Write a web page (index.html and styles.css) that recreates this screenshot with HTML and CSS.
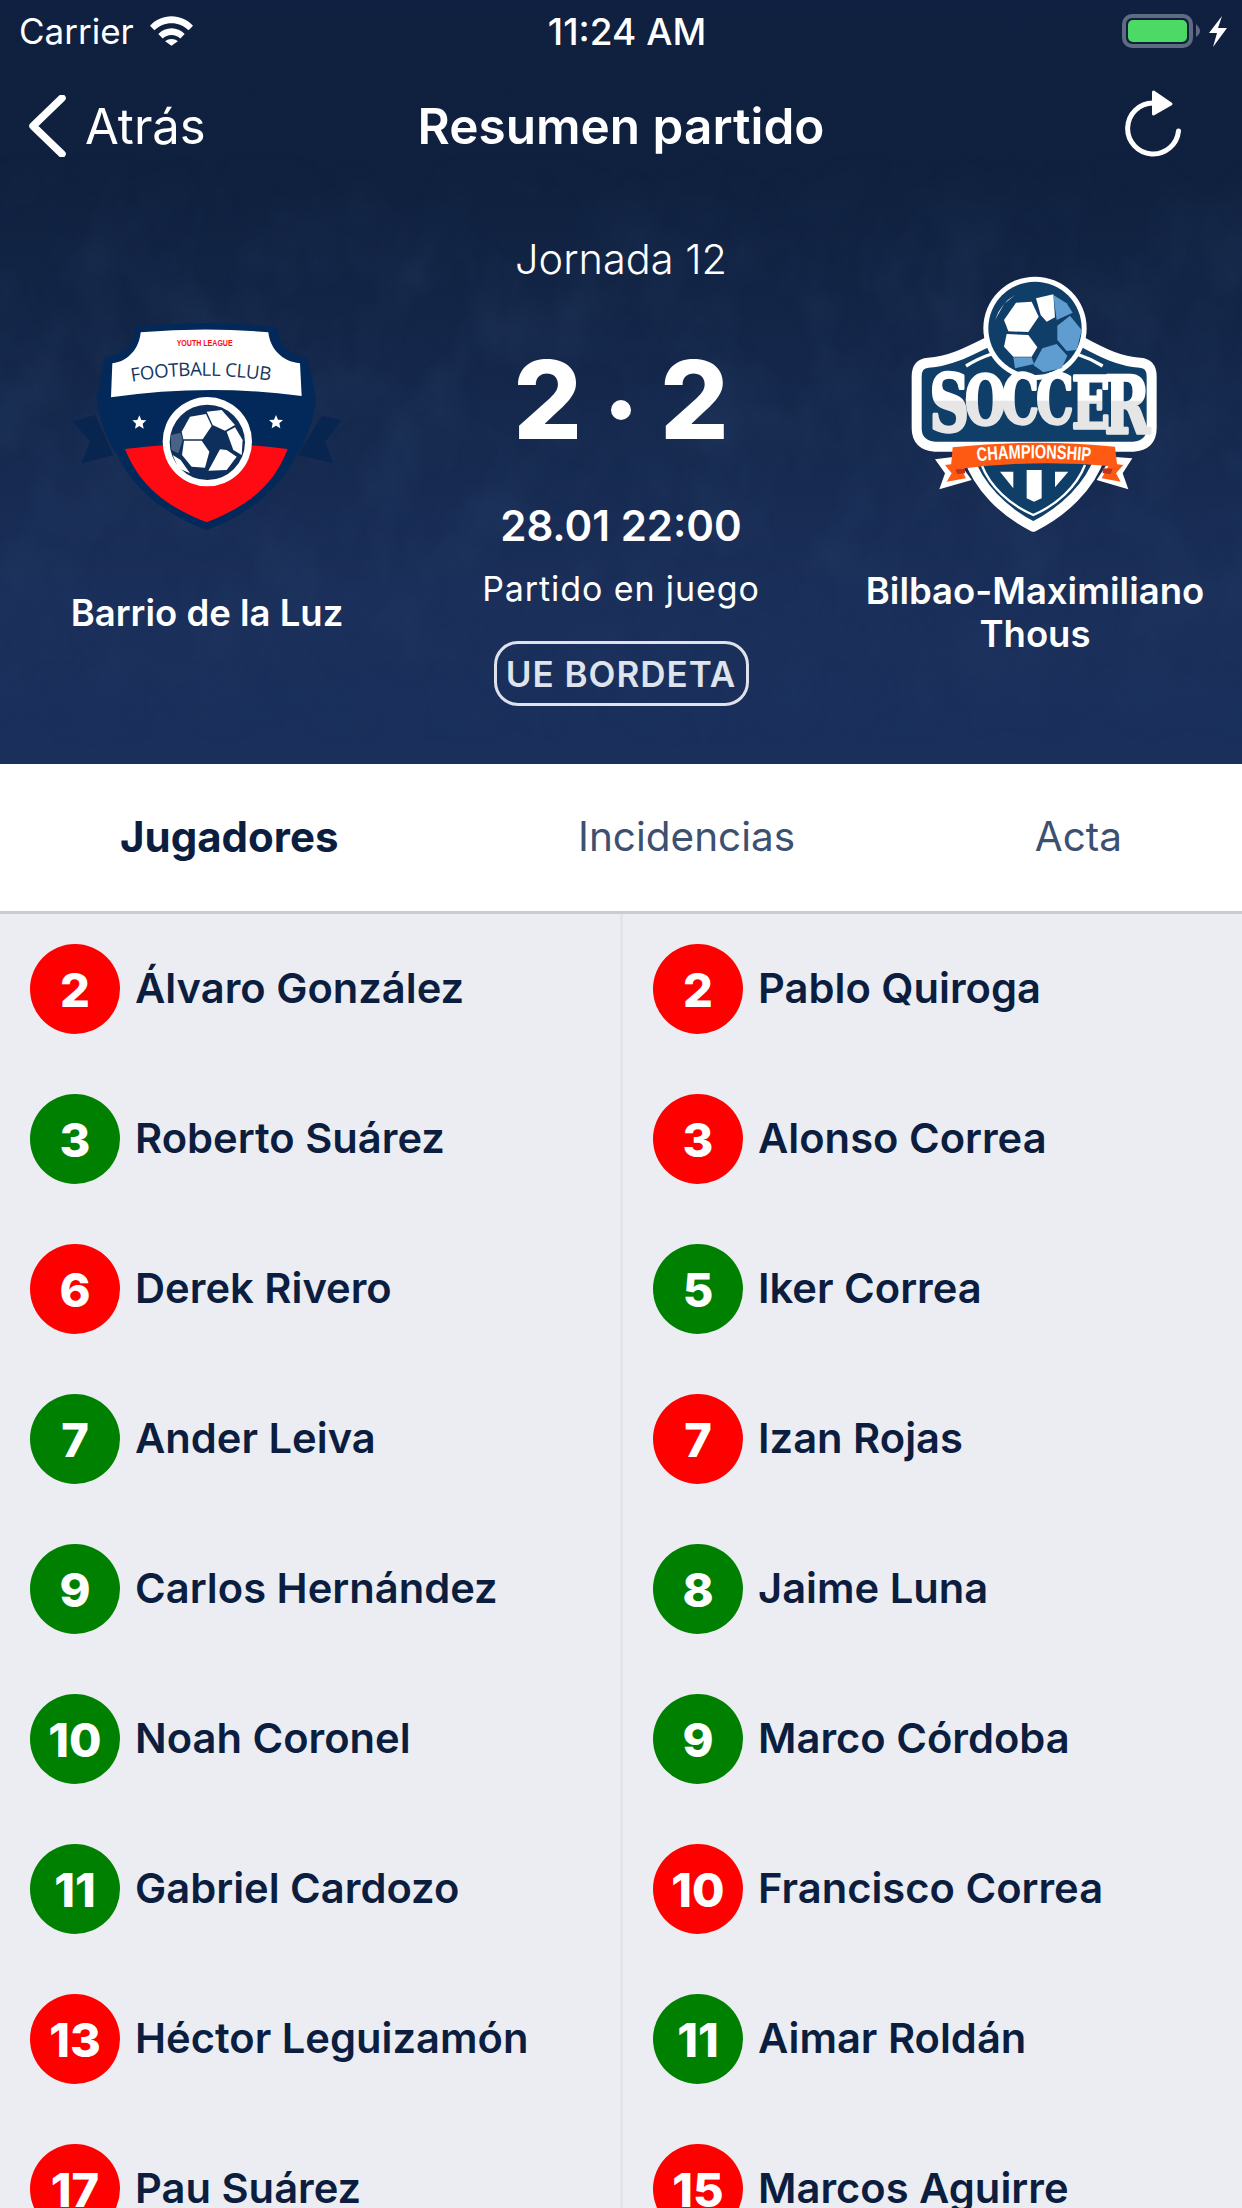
FILE: index.html
```html
<!DOCTYPE html>
<html lang="es">
<head>
<meta charset="utf-8">
<title>Resumen partido</title>
<link rel="stylesheet" href="styles.css">
</head>
<body>
<div class="app">
  <header class="hero">
    <svg class="hero-bg" viewBox="0 0 1242 764" preserveAspectRatio="none" aria-hidden="true">
      <defs>
        <filter id="mottle" x="0" y="0" width="100%" height="100%">
          <feTurbulence type="fractalNoise" baseFrequency=".016 .011" numOctaves="4" seed="11"/>
          <feColorMatrix type="matrix" values="0 0 0 0 .04  0 0 0 0 .09  0 0 0 0 .2  1.600 0 0 0 -.6"/>
        </filter>
        <linearGradient id="fade" x1="0" y1="0" x2="0" y2="1">
          <stop offset=".2" stop-color="#000"/><stop offset=".35" stop-color="#fff"/><stop offset=".75" stop-color="#fff"/><stop offset=".98" stop-color="#000"/>
        </linearGradient>
        <mask id="fade-mask"><rect width="1242" height="764" fill="url(#fade)"/></mask>
      </defs>
      <g mask="url(#fade-mask)"><rect width="1242" height="764" filter="url(#mottle)" opacity=".22"/></g>
    </svg>

    <div class="status-bar">
      <div class="status-left">
        <span>Carrier</span>
        <svg class="wifi" viewBox="0 0 44 30"><path d="M0 9.500C6 3.500 13.500 0 22 0s16 3.500 22 9.500l-4.500 4.800C34.500 9.500 28.500 7 22 7S9.500 9.500 4.500 14.300z"/><path d="M8.500 18C12 14.500 17 12.300 22 12.300S32 14.500 35.500 18L31 22.700C28.500 20.300 25.500 19 22 19s-6.500 1.300-9 3.700z"/><path d="M15.500 25.500C17.300 24 19.500 23.200 22 23.200s4.700.800 6.500 2.300L22 30z"/></svg>
      </div>
      <span class="clock">11:24 AM</span>
      <div class="status-right">
        <svg class="battery" viewBox="0 0 106 34"><rect x="2" y="2" width="67" height="30" rx="8" class="batt-shell"/><rect x="6" y="6" width="59" height="22" rx="5" class="batt-fill"/><path d="M74 10Q78 14 78 17T74 23z" class="batt-nub"/><path class="batt-bolt" d="M100 2 87 19h8l-4 14 14-19h-9z"/></svg>
      </div>
    </div>

    <nav class="nav-bar">
      <div class="nav-back">
        <svg class="chevron" viewBox="0 0 38 62"><path d="M34 3 5 31l29 28"/></svg>
        <span>Atrás</span>
      </div>
      <h1 class="nav-title">Resumen partido</h1>
      <svg class="refresh" viewBox="0 0 56 67"><path class="refresh-arc" d="M53.500 41A25.500 25.500 0 1 1 28 13"/><path class="refresh-head" d="M28.500 2 46 14 28.500 24z"/></svg>
    </nav>

    <section class="match">
      <div class="team team-home">
        <svg class="crest-home" viewBox="-9 0 960 780">
          <g fill="#082550">
            <path d="M70 365 135 345 190 465 95 490 120 425z"/>
            <path d="M875 360 815 347 745 465 850 490 825 425z"/>
          </g>
          <path fill="#02295a" d="M258 82Q470 58 682 82C686 135 715 165 772 172L798 295C790 370 765 430 735 470C680 580 580 650 470 690C360 650 260 580 205 470C175 430 150 370 140 295L165 172C222 165 254 135 258 82Z"/>
          <path fill="#fff" d="M272 97Q470 80 655 97C660 145 695 185 750 190L755 288Q470 250 183 292L187 190C235 185 268 145 272 97Z"/>
          <path fill="#ff0a12" d="M225 447Q470 415 713 447C670 560 590 620 470 667C350 620 270 560 225 447Z"/>
          <text class="crest-youth" x="464" y="139" textLength="168" lengthAdjust="spacingAndGlyphs">YOUTH LEAGUE</text>
          <path id="fc-arc" d="M245 245Q450 210 665 243" fill="none"/>
          <text class="crest-fc"><textPath href="#fc-arc" textLength="418">FOOTBALL CLUB</textPath></text>
          <g fill="#fff">
            <path d="M268 346l6 14 15 1-11 10 3 15-13-8-13 8 3-15-11-10 15-1z"/>
            <path d="M678 345l6 14 15 1-11 10 3 15-13-8-13 8 3-15-11-10 15-1z"/>
          </g>
          <circle cx="472" cy="425" r="134" fill="#fff"/>
          <circle cx="472" cy="427" r="113" fill="#0e2f5c"/>
          <g fill="#fff">
            <path d="M395 395 420 350 468 342 485 378 458 418 400 418z"/>
            <path d="M470 335 515 330 555 375 525 392 488 375z"/>
            <path d="M530 395 555 382 578 420 575 465 550 450z"/>
            <path d="M475 512 510 448 530 450 560 470 530 510z"/>
            <path d="M402 422 455 422 478 455 465 503 425 500 396 465z"/>
            <path d="M368 465 392 480 420 520 385 505z"/>
            <path d="M362 405 392 398 398 420 385 460 364 450z" opacity=".25"/>
          </g>
        </svg>
        <div class="team-name">Barrio de la Luz</div>
      </div>

      <div class="center">
        <div class="round">Jornada 12</div>
        <div class="score"><span>2</span><i class="score-dot"></i><span>2</span></div>
        <div class="datetime">28.01 22:00</div>
        <div class="state">Partido en juego</div>
        <div class="venue">UE BORDETA</div>
      </div>

      <div class="team team-away">
        <svg class="crest-away" viewBox="-15 0 960 870">
          <defs>
            <linearGradient id="soccer-fill" gradientUnits="userSpaceOnUse" x1="0" y1="340" x2="0" y2="520">
              <stop offset=".45" stop-color="#fff"/><stop offset=".46" stop-color="#e6e6e6"/>
            </linearGradient>
            <path id="champ-arc" d="M292 604Q460 586 632 604" fill="none"/>
          </defs>
          <path fill="#0f3f68" stroke="#fff" stroke-width="30" stroke-linejoin="round" d="M265 590C295 680 370 755 460 800 550 755 630 680 660 590z"/>
          <path fill="#0f3f68" stroke="#fff" stroke-width="30" stroke-linejoin="round" d="M145 308C205 305 255 280 325 245H605C670 280 720 305 780 308 805 310 815 325 815 350V505C815 540 795 558 760 560H165C130 558 110 540 110 505V350C110 325 120 310 145 308Z"/>
          <path fill="none" stroke="#fff" stroke-width="7" d="M305 615C330 680 390 735 460 765 530 735 590 680 615 615"/>
          <g fill="#fff">
            <path d="M360 635 400 635 400 685z"/>
            <path d="M440 630H485V715L462 725 440 715z"/>
            <path d="M525 635H565L525 682z"/>
          </g>
          <g fill="none" stroke="#fff" stroke-width="10">
            <path d="M258 318Q295 295 335 282"/>
            <path d="M590 282Q630 295 668 318"/>
          </g>
          <circle cx="465" cy="205" r="155" fill="#fff"/>
          <circle cx="465" cy="205" r="140" fill="#0f3f68"/>
          <g fill="#5f9dd0">
            <path d="M520 105 560 130 578 158 530 180z"/>
            <path d="M532 197 570 167 605 210 590 270 560 273 532 240z"/>
            <path d="M460 315 487 265 530 252 562 287 545 325 490 337z"/>
            <path d="M400 292 455 292 462 312 405 325z"/>
          </g>
          <g fill="#fff">
            <path d="M372 180 408 128 455 125 476 170 445 216 385 214z"/>
            <path d="M468 115 520 103 525 172 500 185 482 165z"/>
            <path d="M380 222 445 225 472 262 455 290 400 290 372 260z"/>
            <path d="M345 180Q362 130 405 105L372 132z"/>
          </g>
          <text class="crest-soccer" transform="scale(.7 1)" fill="url(#soccer-fill)" stroke="url(#soccer-fill)"><tspan x="212" y="513" font-size="235">S</tspan><tspan x="364" y="492" font-size="200">O</tspan><tspan x="522" y="490" font-size="200">C</tspan><tspan x="670" y="490" font-size="200">C</tspan><tspan x="822" y="503" font-size="215">E</tspan><tspan x="962" y="518" font-size="235">R</tspan></text>
          <path fill="#fff" d="M165 598 225 590 275 660 178 688 195 640z"/>
          <path fill="#fff" d="M757 595 695 590 650 660 745 688 728 640z"/>
          <path fill="#ff5a13" d="M195 615 235 610 258 655 200 665 215 640z"/>
          <path fill="#ff5a13" d="M730 615 690 610 665 655 722 665 708 640z"/>
          <path fill="#c0341d" d="M225 626 255 625 255 640 232 642z"/>
          <path fill="#c0341d" d="M668 625 698 626 692 642 668 640z"/>
          <path fill="#ff5a13" d="M218 562Q460 535 705 560L712 620Q460 595 212 630z"/>
          <text class="crest-champ"><textPath href="#champ-arc" textLength="340" lengthAdjust="spacingAndGlyphs">CHAMPIONSHIP</textPath></text>
        </svg>
        <div class="team-name">Bilbao-Maximiliano Thous</div>
      </div>
    </section>
  </header>

  <div class="tabs">
    <span class="tab tab-active">Jugadores</span>
    <span class="tab">Incidencias</span>
    <span class="tab">Acta</span>
  </div>

  <main class="lineups">
    <ul class="lineup">
      <li class="player"><span class="num red">2</span><span class="name">Álvaro González</span></li>
      <li class="player"><span class="num green">3</span><span class="name">Roberto Suárez</span></li>
      <li class="player"><span class="num red">6</span><span class="name">Derek Rivero</span></li>
      <li class="player"><span class="num green">7</span><span class="name">Ander Leiva</span></li>
      <li class="player"><span class="num green">9</span><span class="name">Carlos Hernández</span></li>
      <li class="player"><span class="num green">10</span><span class="name">Noah Coronel</span></li>
      <li class="player"><span class="num green">11</span><span class="name">Gabriel Cardozo</span></li>
      <li class="player"><span class="num red">13</span><span class="name">Héctor Leguizamón</span></li>
      <li class="player"><span class="num red">17</span><span class="name">Pau Suárez</span></li>
    </ul>
    <ul class="lineup lineup-away">
      <li class="player"><span class="num red">2</span><span class="name">Pablo Quiroga</span></li>
      <li class="player"><span class="num red">3</span><span class="name">Alonso Correa</span></li>
      <li class="player"><span class="num green">5</span><span class="name">Iker Correa</span></li>
      <li class="player"><span class="num red">7</span><span class="name">Izan Rojas</span></li>
      <li class="player"><span class="num green">8</span><span class="name">Jaime Luna</span></li>
      <li class="player"><span class="num green">9</span><span class="name">Marco Córdoba</span></li>
      <li class="player"><span class="num red">10</span><span class="name">Francisco Correa</span></li>
      <li class="player"><span class="num green">11</span><span class="name">Aimar Roldán</span></li>
      <li class="player"><span class="num red">15</span><span class="name">Marcos Aguirre</span></li>
    </ul>
  </main>
</div>
</body>
</html>
```
FILE: styles.css
```css
* { box-sizing: border-box; }
html, body { margin: 0; padding: 0; }
body { font-family: Inter, "Noto Sans", sans-serif; background: #ecedf2; }
.app { width: 1242px; height: 2208px; overflow: hidden; display: flex; flex-direction: column; }

.hero { position: relative; height: 764px; flex: none; color: #fff; background: linear-gradient(180deg, #0f2040 0%, #10213f 25%, #1a2f5a 80%, #1a305c 100%); }
.hero-bg { position: absolute; inset: 0; width: 100%; height: 100%; }
.status-bar, .nav-bar, .match { position: relative; }

.status-bar { height: 62px; padding: 0 14px 0 19px; display: grid; grid-template-columns: 1fr auto 1fr; align-items: center; font-size: 35px; }
.status-left { display: flex; align-items: center; gap: 16px; }
.wifi { width: 43px; height: 30px; fill: #fff; }
.clock { font-size: 37px; font-weight: 500; padding-left: 7px; }
.status-right { display: flex; justify-content: flex-end; }
.battery { width: 106px; height: 34px; }
.batt-shell { fill: none; stroke: #5f6b80; stroke-width: 4; }
.batt-fill { fill: #4cd964; }
.batt-nub { fill: #5f6b80; }
.batt-bolt { fill: #fff; }

.nav-bar { height: 128px; margin-bottom: 2px; display: grid; grid-template-columns: 1fr auto 1fr; align-items: center; padding: 0 28px; }
.nav-back { display: flex; align-items: center; gap: 19px; font-size: 49px; }
.chevron { width: 38px; height: 62px; fill: none; stroke: #fff; stroke-width: 7.500; stroke-linecap: round; stroke-linejoin: round; }
.nav-title { margin: 0; font-size: 49.500px; font-weight: 600; }
.refresh { width: 56px; height: 67px; justify-self: end; margin: 0 33px 6px 0; }
.refresh-arc { fill: none; stroke: #fff; stroke-width: 5; stroke-linecap: round; }
.refresh-head { fill: #fff; stroke: #fff; stroke-width: 3; stroke-linejoin: round; }

.match { display: grid; grid-template-columns: repeat(3, 1fr); height: 572px; }
.team { display: flex; flex-direction: column; align-items: center; text-align: center; }
.team-home { padding-top: 108px; }
.team-away { padding-top: 68px; }
.crest-home { width: 320px; height: 260px; flex: none; }
.crest-away { width: 320px; height: 290px; flex: none; }
.team-name { font-size: 36.500px; font-weight: 600; line-height: 43px; }
.team-home .team-name { margin-top: 32px; }
.team-away .team-name { margin-top: 20px; width: 380px; }

.crest-youth { font: 700 27px "Liberation Sans", sans-serif; fill: #ff0a12; text-anchor: middle; }
.crest-fc { font: 400 56px "Open Sans", sans-serif; fill: #17365f; }
.crest-soccer { font-family: "DejaVu Serif", serif; font-weight: 700; stroke-width: 10; stroke-linejoin: round; }
.crest-champ { font: 700 58px "Liberation Sans", sans-serif; fill: #fff; }

.center { display: flex; flex-direction: column; align-items: center; padding-top: 43px; }
.round { font-size: 41.500px; line-height: 48px; font-weight: 300; }
.score { margin-top: 52px; height: 130px; display: flex; align-items: center; gap: 29px; font-size: 108px; font-weight: 800; line-height: 130px; }
.score-dot { width: 20px; height: 20px; border-radius: 50%; background: #fff; margin-top: 20px; }
.datetime { margin-top: 35px; font-size: 42px; font-weight: 600; line-height: 52px; }
.state { margin-top: 15px; font-size: 34px; line-height: 44px; letter-spacing: .9px; }
.venue { margin-top: 30px; width: 255px; height: 65px; border: 3px solid #dfe2ea; border-radius: 24px; display: flex; align-items: center; justify-content: center; font-size: 35px; font-weight: 600; color: #dfe3ec; letter-spacing: 1px; }

.tabs { height: 150px; flex: none; background: #fff; border-bottom: 3px solid #ccc; display: flex; justify-content: space-between; align-items: center; padding: 0 120px 3px; font-size: 40.500px; color: #3d5070; }
.tab-active { font-size: 42px; font-weight: 700; color: #0c1e40; }

.lineups { flex: 1; display: flex; min-height: 0; }
.lineup { margin: 0; padding: 0 0 0 30px; list-style: none; width: 623px; border-right: 3px solid #e3e4ea; }
.lineup-away { padding-left: 30px; flex: 1; border: 0; }
.player { height: 150px; display: flex; align-items: center; gap: 15px; }
.num { width: 90px; height: 90px; flex: none; border-radius: 50%; display: flex; align-items: center; justify-content: center; color: #fff; font-size: 47px; font-weight: 800; }
.red { background: #f00; }
.green { background: #008000; }
.name { font-size: 41.700px; font-weight: 600; color: #0c1e40; position: relative; top: -1px; }
```
